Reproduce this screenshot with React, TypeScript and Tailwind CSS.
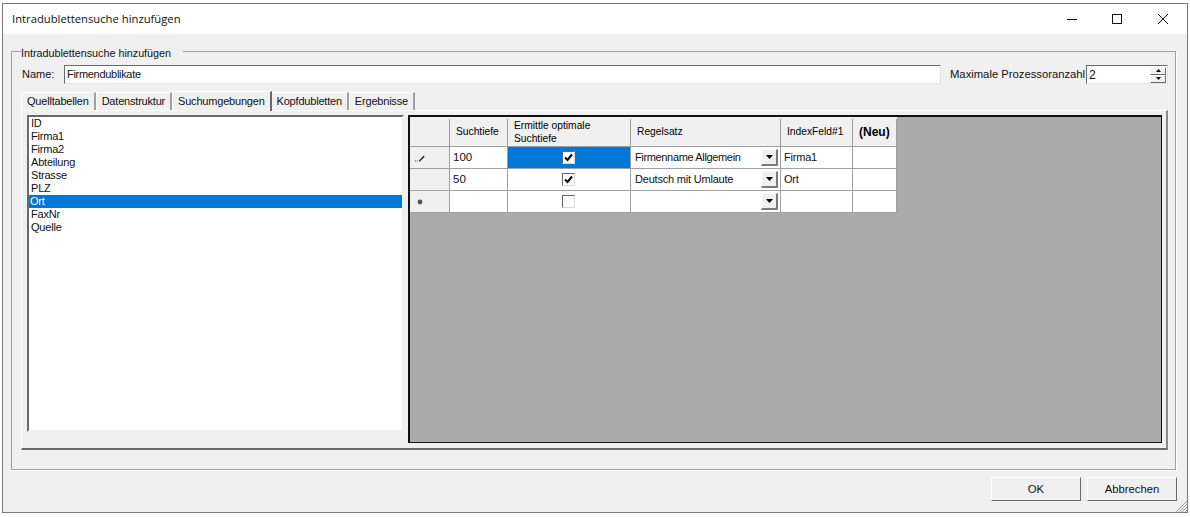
const listItems = ["ID", "Firma1", "Firma2", "Abteilung", "Strasse", "PLZ", "Ort", "FaxNr", "Quelle"];
const tabs = ["Quelltabellen", "Datenstruktur", "Suchumgebungen", "Kopfdubletten", "Ergebnisse"];

const rows = [
  { tiefe: "100", checked: true, regel: "Firmenname Allgemein", feld: "Firma1", marker: "edit" as const, active: true },
  { tiefe: "50", checked: true, regel: "Deutsch mit Umlaute", feld: "Ort", marker: "none" as const, active: false },
  { tiefe: "", checked: false, regel: "", feld: "", marker: "new" as const, active: false },
];

function Marker({ kind }: { kind: "edit" | "none" | "new" }) {
  if (kind === "edit")
    return (
      <svg viewBox="0 0 12 8" className="h-2 w-3">
        <path d="M1 7h1M3 7h1" stroke="#555" strokeWidth="1" />
        <path d="M5 6.5l4.5-5 1.2 1.2-4.7 4.8h-1z" fill="#333" />
      </svg>
    );
  if (kind === "new")
    return (
      <svg viewBox="0 0 6 6" className="h-[6px] w-[6px]">
        <circle cx="3" cy="3" r="2.4" fill="#555" />
      </svg>
    );
  return null;
}

function Check({ checked }: { checked: boolean }) {
  return (
    <span className="flex h-[13px] w-[13px] items-center justify-center border border-t-[#696969] border-l-[#696969] border-r-[#d8d8d8] border-b-[#d8d8d8] bg-white">
      {checked && (
        <svg viewBox="0 0 9 9" className="h-[9px] w-[9px]">
          <path d="M1 4.5l2.5 2.5L8 1.5" fill="none" stroke="#000" strokeWidth="2" />
        </svg>
      )}
    </span>
  );
}

function ComboArrow() {
  return (
    <span className="flex h-[17px] w-[17px] items-center justify-center border-b-2 border-l border-r-2 border-t border-t-white border-l-white border-r-[#7a7a7a] border-b-[#7a7a7a] bg-[#f0f0f0]">
      <svg viewBox="0 0 7 4" className="h-1 w-[7px]">
        <path d="M0 0h7L3.5 4z" fill="#000" />
      </svg>
    </span>
  );
}

function HeaderCell({ children, bold }: { children: React.ReactNode; bold?: boolean }) {
  return (
    <div
      className={`relative flex items-center bg-[#f0f0f0] px-[6px] tracking-normal text-black before:absolute before:-right-px before:top-0 before:h-[2px] before:w-px before:bg-[#f0f0f0] ${
        bold ? "text-[12px] font-bold" : "text-[10.25px] leading-[13px]"
      }`}
    >
      {children}
    </div>
  );
}

export default function App() {
  return (
    <div
      className="h-[517px] w-[1190px] overflow-hidden bg-white pl-[2px] pt-[3px] text-[11px] tracking-[-0.2px] text-[#111]"
      style={{ fontFamily: '"Liberation Sans", Arial, sans-serif' }}
    >
      <div className="relative flex h-[510px] w-[1186px] flex-col border border-[#787878] bg-[#f0f0f0]">
        {/* title bar */}
        <div className="flex h-[30px] shrink-0 items-center bg-white pl-[9px]">
          <span className="text-[11.25px] tracking-normal text-[#111]" style={{ fontFamily: '"Open Sans", sans-serif' }}>
            Intradublettensuche hinzufügen
          </span>
          <div className="ml-auto flex items-center">
            <svg viewBox="0 0 10 10" className="mr-[35px] h-[10px] w-[10px]">
              <path d="M0 5.5h10" stroke="#111" strokeWidth="1" />
            </svg>
            <svg viewBox="0 0 10 10" className="mr-[36px] h-[10px] w-[10px]">
              <rect x="0.5" y="0.5" width="9" height="9" fill="none" stroke="#111" strokeWidth="1" />
            </svg>
            <svg viewBox="0 0 10 10" className="mr-[19px] h-[10px] w-[10px]">
              <path d="M0 0l10 10M10 0L0 10" stroke="#111" strokeWidth="1" />
            </svg>
          </div>
        </div>

        <div className="flex-1 px-[8px] pt-[8px]">
          {/* group box */}
          <fieldset className="h-[428px] w-[1165px] border border-[#a0a0a0] pl-[9px] pr-[7px] shadow-[1px_1px_0_#fff]">
            <legend className="pr-[12px] pt-[4px] text-[10.75px] leading-[14px] tracking-normal">Intradublettensuche hinzufügen</legend>

            <div className="mt-[5px] flex h-[19px] items-center">
              <span className="w-[43px] pl-px tracking-normal">Name:</span>
              <div className="flex h-[19px] w-[877px] items-center border border-t-[#696969] border-l-[#696969] border-r-[#e3e3e3] border-b-[#e3e3e3] bg-white pl-[2px] tracking-[-0.3px]">
                Firmendublikate
              </div>
              <span className="ml-[9px] w-[136px] whitespace-nowrap text-[11.25px] tracking-normal">Maximale Prozessoranzahl</span>
              <div className="flex h-[19px] flex-1 items-center justify-between border border-t-[#696969] border-l-[#696969] border-r-[#e3e3e3] border-b-[#e3e3e3] bg-white pl-[2px]">
                <span className="pt-px text-[12px]">2</span>
                <div className="mr-px flex flex-col">
                  <span className="flex h-[8px] w-[16px] items-center justify-center border border-t-white border-l-white border-r-[#696969] border-b-[#696969] bg-[#f0f0f0]">
                    <svg viewBox="0 0 5 3" className="h-[3px] w-[5px]"><path d="M2.5 0L5 3H0z" fill="#000" /></svg>
                  </span>
                  <span className="flex h-[8px] w-[16px] items-center justify-center border border-t-white border-l-white border-r-[#696969] border-b-[#696969] bg-[#f0f0f0]">
                    <svg viewBox="0 0 5 3" className="h-[3px] w-[5px]"><path d="M0 0h5L2.5 3z" fill="#000" /></svg>
                  </span>
                </div>
              </div>
            </div>

            {/* tabs */}
            <div className="mt-[8px] flex h-[18px] items-end">
              {tabs.map((tab) => {
                const active = tab === "Suchumgebungen";
                return (
                  <div
                    key={tab}
                    className={
                      active
                        ? "relative z-10 -mb-px -mr-px flex h-[20px] items-start border-l border-t border-r-2 border-l-white border-t-white border-r-[#696969] bg-[#f0f0f0] px-[5px] pt-[1px]"
                        : "flex h-[18px] items-center border-l border-t border-r-2 border-l-white border-t-white border-r-[#a0a0a0] px-[5px]"
                    }
                  >
                    {tab}
                  </div>
                );
              })}
            </div>

            {/* tab page */}
            <div className="flex h-[340px] gap-[4px] border border-b-2 border-r-2 border-l-white border-t-white border-r-[#8a8a8a] border-b-[#696969] pl-[5px] pt-[4px]">
              <div className="h-[317px] w-[377px] border-2 border-t-[#696969] border-l-[#696969] border-r-[#f0f0f0] border-b-[#f0f0f0] bg-white leading-[13px]">
                {listItems.map((item) => (
                  <div key={item} className={item === "Ort" ? "h-[13px] bg-[#0078d7] pl-[1px] text-white" : "h-[13px] pl-[2px]"}>
                    {item}
                  </div>
                ))}
              </div>

              <div className="h-[328px] w-[754px] border-b border-l-2 border-r border-t-2 border-[#111] bg-[#ababab]">
                <div className="grid w-fit grid-cols-[39px_57px_122px_149px_71px_43px] grid-rows-[29px_21px_21px_21px] gap-px bg-[#a0a0a0] pb-px pr-px">
                  <HeaderCell>{""}</HeaderCell>
                  <HeaderCell>Suchtiefe</HeaderCell>
                  <HeaderCell>Ermittle optimale Suchtiefe</HeaderCell>
                  <HeaderCell>Regelsatz</HeaderCell>
                  <HeaderCell>IndexFeld#1</HeaderCell>
                  <HeaderCell bold>(Neu)</HeaderCell>
                  {rows.map((row) => (
                    <div key={row.marker} className="contents">
                      <div className="flex items-center justify-center bg-[#f0f0f0] pr-[19px]">
                        <Marker kind={row.marker} />
                      </div>
                      <div className="flex items-center bg-white pl-[3px] text-[11.5px] tracking-normal text-[#111]">{row.tiefe}</div>
                      <div className={`flex items-center justify-center pr-px ${row.active ? "bg-[#0078d7]" : "bg-white"}`}>
                        <Check checked={row.checked} />
                      </div>
                      <div className="flex items-center justify-between bg-white pl-[4px] pr-[2px]">
                        <span className={row.active ? "tracking-[-0.35px]" : ""}>{row.regel}</span>
                        <ComboArrow />
                      </div>
                      <div className="flex items-center bg-white pl-[3px]">{row.feld}</div>
                      <div className="bg-white" />
                    </div>
                  ))}
                </div>
              </div>
            </div>
          </fieldset>

          {/* dialog buttons */}
          <div className="mt-[7px] flex justify-end gap-[6px] pr-[2px]">
            <button className="h-[24px] w-[90px] border border-t-white border-l-white border-r-[#696969] border-b-[#696969] bg-[#f0f0f0] text-[11.25px] tracking-normal">OK</button>
            <button className="h-[24px] w-[90px] border border-t-white border-l-white border-r-[#696969] border-b-[#696969] bg-[#f0f0f0] text-[11.25px] tracking-normal">Abbrechen</button>
          </div>
        </div>

        {/* resize grip */}
        <svg viewBox="0 0 12 12" className="absolute bottom-0 right-0 h-3 w-3">
          <path d="M12 1L1 12M12 4L4 12M12 7L7 12M12 10L10 12" stroke="#a0a0a0" strokeWidth="1" />
        </svg>
      </div>
    </div>
  );
}
